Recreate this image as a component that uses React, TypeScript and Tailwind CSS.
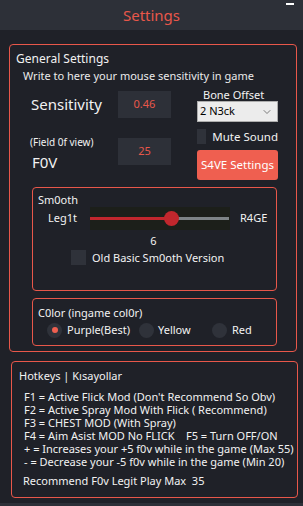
import { ChevronDown } from 'lucide-react'

export default function App() {
  const hotkeys = [
    'F1 = Active Flick Mod (Don\'t Recommend So Obv)',
    'F2 = Active Spray Mod With Flick ( Recommend)',
    'F3 = CHEST MOD (With Spray)',
  ]

  return (
    <div className="w-[303px] h-[506px] bg-[#1f2128] text-[#f2f2f2] flex flex-col overflow-hidden font-['Noto_Sans',sans-serif] text-[11px]">
      {/* title bar */}
      <div className="h-[30px] shrink-0 bg-[#2d3038] grid grid-cols-[1fr_auto_1fr] items-center">
        <div />
        <div className="text-[15px] text-[#e8574a] leading-none">Settings</div>
        <div className="flex justify-end pr-[9px]">
          <div className="w-[8px] h-[2px] bg-white -mt-[12px]" />
        </div>
      </div>

      {/* general settings */}
      <div className="mt-[14px] ml-[9px] w-[288px] h-[308px] border border-[#e8574a] rounded-[4px] flex flex-col">
        <div className="pl-[6px] pt-[6px] text-[12px] leading-[15px]">General Settings</div>
        <div className="pl-[13px] pt-[2px] leading-[15px] text-[#eaeaea]">
          Write to here your mouse sensitivity in game
        </div>

        <div className="flex pl-[21px] mt-[4px]">
          <div className="flex flex-col w-[140px]">
            <div className="flex items-center h-[27px] mt-[4px]">
              <div className="w-[87px] text-[15px] leading-none">Sensitivity</div>
              <div className="w-[53px] h-[27px] bg-[#2d3038] flex items-center justify-center text-[#e8574a]">0.46</div>
            </div>
            <div className="flex items-center h-[36px] mt-[17px]">
              <div className="w-[87px] flex flex-col">
                <span className="text-[10px] leading-[14px] -ml-[1px]">(Field 0f view)</span>
                <span className="text-[15px] leading-[20px] mt-[3px] ml-[1px]">F0V</span>
              </div>
              <div className="w-[53px] h-[27px] bg-[#2d3038] flex items-center justify-center text-[#e8574a] -mt-[4px]">25</div>
            </div>
          </div>

          <div className="flex flex-col ml-[26px] w-[81px]">
            <div className="leading-[15px] pl-[6px]">Bone Offset</div>
            <div className="-mt-[1px] h-[21px] bg-[#ececec] border border-[#adadad] flex items-center justify-between pl-[2px] pr-[4px] text-black">
              <span>2 N3ck</span>
              <ChevronDown className="w-[12px] h-[12px] text-[#555]" strokeWidth={1.5} />
            </div>
            <div className="flex items-center mt-[7px]">
              <div className="w-[15px] h-[15px] bg-[#2f323a]" />
              <span className="ml-[6px] text-[11.5px] leading-none whitespace-nowrap">Mute Sound</span>
            </div>
            <div className="mt-[6px] h-[30px] rounded-[3px] bg-[#ef5f50] flex items-center justify-center text-[11.5px] text-white whitespace-nowrap">
              S4VE Settings
            </div>
          </div>
        </div>

        {/* smooth */}
        <div className="ml-[22px] mt-[7px] w-[245px] h-[104px] border border-[#e8574a] rounded-[4px] flex flex-col">
          <div className="pl-[5px] pt-[4px] leading-[15px]">Sm0oth</div>
          <div className="flex items-center mt-[0px] h-[23px]">
            <span className="ml-[15px] w-[42px]">Leg1t</span>
            <div className="relative w-[140px] h-[23px] bg-[#1c1f1a] flex items-center">
              <div className="w-[80px] h-[3px] bg-[#c1272d]" />
              <div className="flex-1 h-[3px] bg-[#7e8487] mr-[1px]" />
              <div className="absolute left-[74px] top-[4px] w-[15px] h-[15px] rounded-full bg-[#c1272d]" />
            </div>
            <span className="ml-[10px]">R4GE</span>
          </div>
          <div className="text-center leading-[15px] mt-[3px] pr-[2px]">6</div>
          <div className="flex items-center ml-[38px] mt-[2px]">
            <div className="w-[15px] h-[15px] bg-[#2f323a]" />
            <span className="ml-[6px] leading-none">Old Basic Sm0oth Version</span>
          </div>
        </div>

        {/* colour */}
        <div className="ml-[22px] mt-[7px] w-[245px] h-[48px] border border-[#e8574a] rounded-[4px] flex flex-col">
          <div className="pl-[5px] pt-[6px] leading-[15px]">C0lor (ingame col0r)</div>
          <div className="flex items-center mt-[2px]">
            <div className="ml-[14px] w-[15px] h-[15px] rounded-full bg-[#2f323a] flex items-center justify-center">
              <div className="w-[6px] h-[6px] rounded-full bg-[#ef5f50]" />
            </div>
            <span className="ml-[5px] w-[72px]">Purple(Best)</span>
            <div className="w-[15px] h-[15px] rounded-full bg-[#2f323a]" />
            <span className="ml-[4px] w-[54px]">Yellow</span>
            <div className="w-[15px] h-[15px] rounded-full bg-[#2f323a]" />
            <span className="ml-[5px]">Red</span>
          </div>
        </div>
      </div>

      {/* hotkeys */}
      <div className="mt-[9px] ml-[11px] w-[287px] h-[137px] border border-[#e8574a] rounded-[4px] flex flex-col">
        <div className="pl-[7px] pt-[6px] leading-[15px]">Hotkeys | Kısayollar</div>
        <div className="pl-[12px] mt-[7px] leading-[13px] flex flex-col">
          {hotkeys.map((h) => (
            <span key={h} className="whitespace-nowrap">{h}</span>
          ))}
          <span className="whitespace-nowrap">F4 = Aim Asist MOD No FLICK&nbsp;&nbsp;&nbsp; F5 = Turn OFF/ON</span>
          <span className="whitespace-nowrap">+ = Increases your +5 f0v while in the game (Max 55)</span>
          <span className="whitespace-nowrap">- = Decrease your -5 f0v while in the game (Min 20)</span>
        </div>
        <div className="pl-[11px] mt-[5px] leading-[15px]">Recommend F0v Legit Play Max&nbsp; 35</div>
      </div>

      <div className="mt-auto h-[3px] bg-[#2d3038]" />
    </div>
  )
}
